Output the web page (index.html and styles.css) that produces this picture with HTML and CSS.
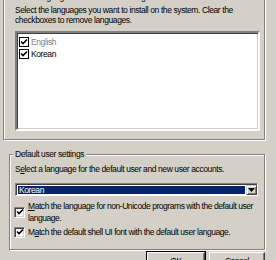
FILE: index.html
```html
<!DOCTYPE html>
<html lang="en">
<head>
    <meta charset="UTF-8">
    <title>Regional and Language Options</title>
    <link rel="stylesheet" href="styles.css">
</head>
<body>
    <!-- Install languages group (top cut off) -->
    <fieldset class="group group-install">
        <legend class="group-label">Install languages for menus and dialogs</legend>
        <p class="hint">Select the languages you want to install on the system. Clear the<br>checkboxes to remove languages.</p>
        <div class="listbox">
            <div class="list-item disabled">
                <span class="flat-check"><svg width="8" height="8" viewBox="0 0 8 8"><path d="M1 3.5 L3 5.5 L7 1.5" fill="none" stroke="#000" stroke-width="1.6"/></svg></span>
                English
            </div>
            <div class="list-item">
                <span class="flat-check"><svg width="8" height="8" viewBox="0 0 8 8"><path d="M1 3.5 L3 5.5 L7 1.5" fill="none" stroke="#000" stroke-width="1.6"/></svg></span>
                Korean
            </div>
        </div>
    </fieldset>

    <!-- Default user settings group -->
    <fieldset class="group group-default">
        <legend class="group-label">Default user settings</legend>
        <p class="hint">S<u>e</u>lect a language for the default user and new user accounts.</p>
        <div class="combo">
            <div class="combo-value">Korean</div>
            <div class="combo-btn"><svg width="7" height="4" viewBox="0 0 7 4"><path d="M0 0 H7 L3.5 4 Z" fill="#000"/></svg></div>
        </div>
        <div class="check-row">
            <span class="check3d"><svg width="8" height="8" viewBox="0 0 8 8"><path d="M1 3.5 L3 5.5 L7 1.5" fill="none" stroke="#000" stroke-width="1.6"/></svg></span>
            <span class="check-text"><u>M</u>atch the language for non-Unicode programs with the default user<br>language.</span>
        </div>
        <div class="check-row">
            <span class="check3d"><svg width="8" height="8" viewBox="0 0 8 8"><path d="M1 3.5 L3 5.5 L7 1.5" fill="none" stroke="#000" stroke-width="1.6"/></svg></span>
            <span class="check-text">M<u>a</u>tch the default shell UI font with the default user language.</span>
        </div>
    </fieldset>

    <div class="buttons">
        <button class="win-btn default">OK</button>
        <button class="win-btn">Cancel</button>
    </div>
</body>
</html>
```

FILE: styles.css
```css
* {
    box-sizing: border-box;
}

body {
    margin: 0;
    width: 276px;
    height: 260px;
    overflow: hidden;
    background-color: #d4d0c8;
    font-family: "Liberation Sans", Arial, sans-serif;
    font-size: 8.5px;
    letter-spacing: -0.4px;
    line-height: 10px;
    color: #000;
}

p {
    margin: 0;
    white-space: nowrap;
}

/* === GROUP BOXES (etched) === */
.group {
    border: 1px solid #808080;
    box-shadow: inset 1px 1px 0 #fff, 1px 1px 0 #fff;
    min-width: 0;
}

.group-label {
    padding: 0 2px;
    margin-left: -2px;
    line-height: 11px;
    background-color: #d4d0c8;
    white-space: nowrap;
}

.group-install {
    width: 262px;
    margin: -8px 0 0 3px;
    padding: 0 4px 8px 11px;
}

.group-install .hint {
    margin-top: 2px;
}

.group-default {
    width: 256px;
    margin: 9px 0 0 9px;
    padding: 0 6px 11px 5px;
}

.group-default .hint {
    margin-top: 4px;
}

/* === LIST VIEW === */
.listbox {
    width: 245px;
    height: 100px;
    margin-top: 6px;
    background-color: #fff;
    border: 2px solid;
    border-color: #808080 #fff #fff #808080;
    box-shadow: inset 1px 1px 0 #404040, inset -1px -1px 0 #d4d0c8;
    padding: 3px 2px;
}

.list-item {
    display: flex;
    align-items: center;
    gap: 2px;
    height: 12px;
}

.list-item.disabled {
    color: #808080;
}

.flat-check {
    width: 10px;
    height: 10px;
    border: 1px solid #000;
    background-color: #fff;
    display: flex;
    align-items: center;
    justify-content: center;
}

/* === COMBO BOX === */
.combo {
    display: flex;
    width: 243px;
    height: 13px;
    margin-top: 9px;
    background-color: #fff;
    border: 1px solid;
    border-color: #808080 #fff #fff #808080;
    box-shadow: inset 1px 1px 0 #404040;
    padding: 1px 0 0 1px;
}

.combo-value {
    flex: 1;
    margin: 1px;
    background-color: #0a246a;
    color: #fff;
    line-height: 9px;
    padding-left: 1px;
}

.combo-btn {
    width: 11px;
    background-color: #d4d0c8;
    border: 1px solid;
    border-color: #d4d0c8 #404040 #404040 #d4d0c8;
    box-shadow: inset 1px 1px 0 #fff, inset -1px -1px 0 #808080;
    display: flex;
    align-items: center;
    justify-content: center;
}

/* === CHECKBOXES === */
.check-row {
    display: flex;
    align-items: center;
    gap: 3px;
    margin: 2px 0 0 -1px;
}

.combo + .check-row {
    margin-top: 4px;
}

.check-text {
    white-space: nowrap;
    line-height: 12px;
    letter-spacing: -0.45px;
}

.check3d {
    flex: none;
    width: 11px;
    height: 11px;
    background-color: #fff;
    border: 1px solid;
    border-color: #808080 #fff #fff #808080;
    box-shadow: inset 1px 1px 0 #404040, inset -1px -1px 0 #d4d0c8;
    display: flex;
    align-items: center;
    justify-content: center;
}

/* === BUTTONS === */
.buttons {
    display: flex;
    justify-content: flex-end;
    gap: 4px;
    width: 265px;
    margin-top: 2px;
}

.win-btn {
    font: inherit;
    letter-spacing: inherit;
    width: 56px;
    height: 18px;
    padding: 0;
    background-color: #d4d0c8;
    border: 1px solid;
    border-color: #fff #404040 #404040 #fff;
    box-shadow: inset -1px -1px 0 #808080;
    color: #000;
}

.win-btn.default {
    width: 58px;
    outline: 1px solid #000;
    outline-offset: 0;
}
```
